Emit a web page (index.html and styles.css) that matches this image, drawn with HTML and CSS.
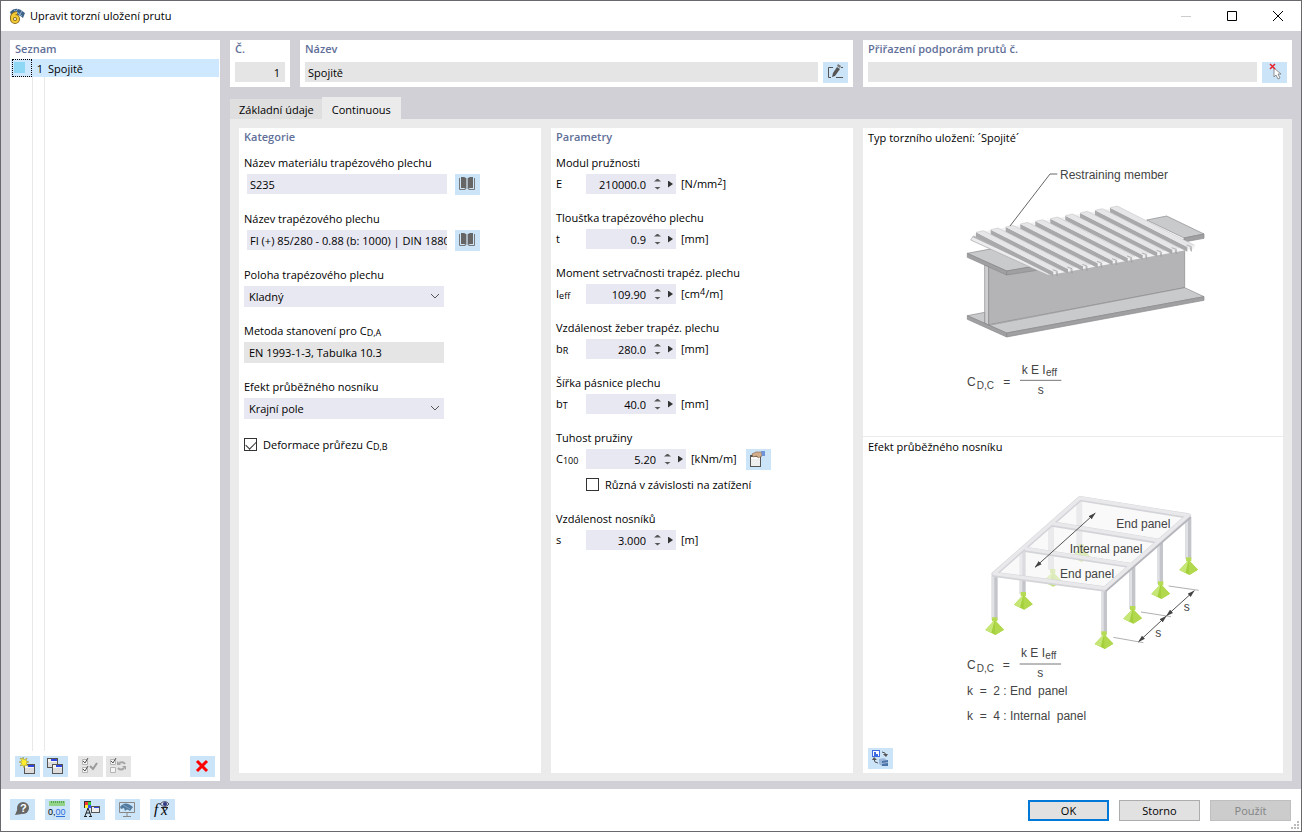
FILE: index.html
```html
<!DOCTYPE html>
<html lang="cs">
<head>
  <meta charset="utf-8">
  <title>Upravit torzní uložení prutu</title>
  <link rel="stylesheet" href="styles.css">
</head>
<body>
  <svg class="defs" aria-hidden="true">
    <defs>
      <g id="book">
        <path d="M4.500 4v11.500h6M19.500 4v11.500h-6" fill="none" stroke="#777"/>
        <path d="M6 3h3l2 1v11l-2-1H6zM18 3h-3l-2 1v11l2-1h3z" fill="#666"/>
        <path d="M11 4h2v11h-2z" fill="#aab6c0"/>
      </g>
      <g id="window">
        <path d="M0 0h11v10H0z" fill="#555"/>
        <path d="M1 1h9v8H1z" fill="#f2f2f2"/>
        <path d="M1 4h9v5H1z" fill="#dcdcdc"/>
        <path d="M4 1h6v2H4z" fill="#2f47e0"/>
      </g>
      <g id="tick-box">
        <path d="M.5.500h5v5h-5z" fill="#f4f4f4" stroke="#b5b5b5"/>
      </g>
      <g id="support">
        <path d="M-8-12h16v12H-8z" fill="#b6dc55"/>
        <path d="M0-4L-28 26l30 15 26-16z" fill="#a4d03c"/>
        <path d="M0-4L-28 26l18 9z" fill="#c6e676"/>
        <path d="M0-4L28 25 2 41z" fill="#b2d94e"/>
      </g>
      <g id="ridge">
        <path d="M0 0l232 118v14L0 14z" fill="#a9a9ac"/>
        <path d="M0 0l22-5 232 118-22 5z" fill="#e6e6e8"/>
        <path d="M0 0l22-5 232 118" fill="none" stroke="#a5a5a8" stroke-width="1"/>
        <path d="M230 112l14 5v14l-4-12" fill="#e0e0e2" stroke="#98989b" stroke-width="2"/>
      </g>
      <marker id="arrow" viewBox="0 0 20 12" refX="19" refY="6" markerWidth="22" markerHeight="16" markerUnits="userSpaceOnUse" orient="auto-start-reverse">
        <path d="M0 0l20 6-20 6z" fill="#444"/>
      </marker>
    </defs>
  </svg>

  <div class="window">
    <header class="titlebar">
      <svg class="app-icon" viewBox="0 0 16 16" width="16" height="16">
        <path d="M1 4q6-7 15 1l-2 5q-5-5-12-3z" fill="#3f6287"/>
        <path d="M5 2l8 6M9 1L4 6M13 3l-3 5" stroke="#8fb0d0"/>
        <path d="M8 5Q2 6 3 11" fill="none" stroke="#8a6c1c" stroke-width="4"/>
        <circle cx="6" cy="11" r="3" fill="#fff" stroke="#8a6c1c" stroke-width="4"/>
        <path d="M8 5Q2 6 3 11" fill="none" stroke="#f4cc35" stroke-width="2"/>
        <circle cx="6" cy="11" r="3" fill="none" stroke="#f4cc35" stroke-width="2"/>
      </svg>
      <h1>Upravit torzní uložení prutu</h1>
      <button class="win-btn" aria-label="Minimalizovat" disabled><svg viewBox="0 0 12 12" width="12" height="12"><path d="M1 6.500h10" stroke="#ccc"/></svg></button>
      <button class="win-btn" aria-label="Maximalizovat"><svg viewBox="0 0 12 12" width="12" height="12"><path d="M1.500 1.500h9v9h-9z" fill="none" stroke="#000"/></svg></button>
      <button class="win-btn" aria-label="Zavřít"><svg viewBox="0 0 12 12" width="12" height="12"><path d="M1 1l10 10M11 1L1 11" stroke="#000"/></svg></button>
    </header>

    <main class="main">
      <aside class="card list">
        <h2>Seznam</h2>
        <ul class="items">
          <li class="item"><span class="swatch"></span><span class="no">1</span><span class="name">Spojitě</span></li>
        </ul>
        <div class="list-tools">
          <button class="tool" aria-label="Nový"><svg viewBox="0 0 25 21">
            <use href="#window" x="9" y="8"/>
            <path d="M8 1l1 3 3-2-1 3 3 1-3 1 2 3-3-1-1 3-1-3-3 1 2-3-3-1 3-1-2-3 3 1z" fill="#ffee2e" stroke="#8f8a2c" stroke-width=".5"/>
          </svg></button>
          <button class="tool" aria-label="Kopírovat"><svg viewBox="0 0 25 21">
            <use href="#window" x="4" y="2"/><use href="#window" x="9" y="8"/>
          </svg></button>
          <button class="tool off gap" aria-label="Vybrat vše" disabled><svg viewBox="0 0 25 21">
            <use href="#tick-box" x="4" y="3"/><use href="#tick-box" x="4" y="11"/>
            <path d="M5 5l2 2 3-5M5 13l2 2 3-5" fill="none" stroke="#555"/>
            <path d="M12 10l3 3 4-6" fill="none" stroke="#9a9a9a" stroke-width="2"/>
          </svg></button>
          <button class="tool off" aria-label="Invertovat výběr" disabled><svg viewBox="0 0 25 21">
            <use href="#tick-box" x="4" y="3"/><use href="#tick-box" x="4" y="11"/>
            <path d="M5 5l2 2 3-5" fill="none" stroke="#555"/>
            <path d="M19 8q-2-3-6-1M12 12q3 3 6 0" fill="none" stroke="#a5a5a5" stroke-width="2"/>
            <path d="M11 5v4h4zM20 14v-4h-4z" fill="#a5a5a5"/>
          </svg></button>
          <button class="tool last" aria-label="Smazat"><svg viewBox="0 0 25 21">
            <path d="M7 5l10 10M17 5L7 15" stroke="#f00" stroke-width="3"/>
          </svg></button>
        </div>
      </aside>

      <section class="content">
        <div class="head">
          <div class="card">
            <h2><label for="no">Č.</label></h2>
            <div class="row"><input class="field grey right" id="no" value="1" readonly></div>
          </div>
          <div class="card">
            <h2><label for="name">Název</label></h2>
            <div class="row">
              <input class="field grey" id="name" value="Spojitě" readonly>
              <button class="tool" aria-label="Upravit název"><svg viewBox="0 0 25 21">
                <path d="M10 5.500H5.500v10H8M18 5.500h2M13 15.500h7" fill="none" stroke="#555"/>
                <path d="M9 15l1-4 4-6 3 2-5 7z" fill="#555"/><path d="M14 4l1-2 3 2-1 2z" fill="#777"/>
              </svg></button>
            </div>
          </div>
          <div class="card">
            <h2><label for="assign">Přiřazení podporám prutů č.</label></h2>
            <div class="row">
              <input class="field grey" id="assign" readonly>
              <button class="tool" aria-label="Vybrat pruty"><svg viewBox="0 0 25 21">
                <path d="M12 6v9l2-2 2 4 2-1-2-4h3z" fill="#fff" stroke="#777" stroke-width=".8"/>
                <path d="M8 2l5 5M13 2L8 7" stroke="#e8202a" stroke-width="1.500"/>
              </svg></button>
            </div>
          </div>
        </div>

        <div class="tabs" role="tablist">
          <button class="tab" role="tab">Základní údaje</button>
          <button class="tab active" role="tab" aria-selected="true">Continuous</button>
        </div>

        <div class="pane">
          <div class="card">
            <h2>Kategorie</h2>
            <div class="group">
              <label for="material">Název materiálu trapézového plechu</label>
              <div class="row library">
                <input class="field" id="material" value="S235">
                <button class="tool" aria-label="Knihovna materiálů"><svg viewBox="0 0 25 21"><use href="#book"/></svg></button>
              </div>
            </div>
            <div class="group">
              <label for="sheet">Název trapézového plechu</label>
              <div class="row library">
                <input class="field" id="sheet" value="FI (+) 85/280 - 0.88 (b: 1000) | DIN 18807">
                <button class="tool" aria-label="Knihovna plechů"><svg viewBox="0 0 25 21"><use href="#book"/></svg></button>
              </div>
            </div>
            <div class="group">
              <label for="position">Poloha trapézového plechu</label>
              <div class="select">
                <select id="position"><option>Kladný</option><option>Záporný</option></select>
                <svg viewBox="0 0 10 6" width="10" height="6"><path d="M1 1l4 4 4-4" fill="none" stroke="#555"/></svg>
              </div>
            </div>
            <div class="group">
              <label for="method">Metoda stanovení pro C<sub>D,A</sub></label>
              <input class="field grey method" id="method" value="EN 1993-1-3, Tabulka 10.3" readonly>
            </div>
            <div class="group">
              <label for="effect">Efekt průběžného nosníku</label>
              <div class="select">
                <select id="effect"><option>Krajní pole</option><option>Vnitřní pole</option></select>
                <svg viewBox="0 0 10 6" width="10" height="6"><path d="M1 1l4 4 4-4" fill="none" stroke="#555"/></svg>
              </div>
            </div>
            <label class="check"><input type="checkbox" checked><span>Deformace průřezu C<sub>D,B</sub></span></label>
          </div>

          <div class="card">
            <h2>Parametry</h2>
            <div class="group">
              <label for="e">Modul pružnosti</label>
              <div class="param">
                <span class="symbol">E</span>
                <div class="spin"><input id="e" value="210000.0"><span class="steps"><button aria-label="Zvýšit"></button><button aria-label="Snížit"></button></span><button class="more" aria-label="Další"></button></div>
                <span class="unit">[N/mm<sup>2</sup>]</span>
              </div>
            </div>
            <div class="group">
              <label for="t">Tloušťka trapézového plechu</label>
              <div class="param">
                <span class="symbol">t</span>
                <div class="spin"><input id="t" value="0.9"><span class="steps"><button aria-label="Zvýšit"></button><button aria-label="Snížit"></button></span><button class="more" aria-label="Další"></button></div>
                <span class="unit">[mm]</span>
              </div>
            </div>
            <div class="group">
              <label for="ieff">Moment setrvačnosti trapéz. plechu</label>
              <div class="param">
                <span class="symbol">I<sub>eff</sub></span>
                <div class="spin"><input id="ieff" value="109.90"><span class="steps"><button aria-label="Zvýšit"></button><button aria-label="Snížit"></button></span><button class="more" aria-label="Další"></button></div>
                <span class="unit">[cm<sup>4</sup>/m]</span>
              </div>
            </div>
            <div class="group">
              <label for="br">Vzdálenost žeber trapéz. plechu</label>
              <div class="param">
                <span class="symbol">b<sub>R</sub></span>
                <div class="spin"><input id="br" value="280.0"><span class="steps"><button aria-label="Zvýšit"></button><button aria-label="Snížit"></button></span><button class="more" aria-label="Další"></button></div>
                <span class="unit">[mm]</span>
              </div>
            </div>
            <div class="group">
              <label for="bt">Šířka pásnice plechu</label>
              <div class="param">
                <span class="symbol">b<sub>T</sub></span>
                <div class="spin"><input id="bt" value="40.0"><span class="steps"><button aria-label="Zvýšit"></button><button aria-label="Snížit"></button></span><button class="more" aria-label="Další"></button></div>
                <span class="unit">[mm]</span>
              </div>
            </div>
            <div class="group">
              <label for="c100">Tuhost pružiny</label>
              <div class="param">
                <span class="symbol">C<sub>100</sub></span>
                <div class="spin wide"><input id="c100" value="5.20"><span class="steps"><button aria-label="Zvýšit"></button><button aria-label="Snížit"></button></span><button class="more" aria-label="Další"></button></div>
                <span class="unit">[kNm/m]</span>
                <button class="tool" aria-label="Převzít hodnotu"><svg viewBox="0 0 25 21">
                  <path d="M4 6h11v12H4z" fill="#555"/><path d="M5 8h9v9H5z" fill="#eee"/><path d="M5 8h9v2H5z" fill="#fff"/>
                  <path d="M6 5l4-2h6v4l-4 2-1-2-4 1z" fill="#d3ad8c" stroke="#80654e" stroke-width=".6"/>
                  <path d="M15 2h4v5h-3z" fill="#6f93d8"/>
                </svg></button>
              </div>
              <label class="check indent"><input type="checkbox"><span>Různá v závislosti na zatížení</span></label>
            </div>
            <div class="group">
              <label for="s">Vzdálenost nosníků</label>
              <div class="param">
                <span class="symbol">s</span>
                <div class="spin"><input id="s" value="3.000"><span class="steps"><button aria-label="Zvýšit"></button><button aria-label="Snížit"></button></span><button class="more" aria-label="Další"></button></div>
                <span class="unit">[m]</span>
              </div>
            </div>
          </div>

          <div class="card pictures">
            <div class="picture">
              <h3>Typ torzního uložení: ´Spojité´</h3>
              <svg class="drawing" viewBox="-51 0 840 780" width="280" height="260">
                <g stroke="#88888b" stroke-width="2" stroke-linejoin="round">
                  <path d="M590 210l60-12 112 54-60 12z" fill="#c9cacc"/>
                  <path d="M762 252v13l-60 11v-12z" fill="#a0a0a3"/>
                  <path d="M104 345l12 4v177l-12-6z" fill="#cfcfd1"/>
                  <path d="M116 349l588-80v144L116 524z" fill="#b4b4b7"/>
                  <path d="M52 497l52-10v33l12 6 588-113 58 27-592 109z" fill="#c9cacc"/>
                  <path d="M52 497l118 52v12L52 508z" fill="#a0a0a3"/>
                  <path d="M170 549l592-109v11L170 561z" fill="#a0a0a3"/>
                  <path d="M52 310l80-15 150 50-112 18z" fill="#c9cacc"/>
                  <path d="M52 310l118 53v12L52 322z" fill="#a0a0a3"/>
                  <path d="M170 363l90-16v14l-90 14z" fill="#a0a0a3"/>
                </g>
                <path d="M62 270l16-22 424-76 232 116-2 8-436 80z" fill="#f2f2f3"/>
                <path d="M62 270l235 107v-12L70 258z" fill="#ececee" stroke="#a5a5a8" stroke-width="2"/>
                <path d="M70 260l229 107" stroke="#b0b0b3" stroke-width="4"/>
                <use href="#ridge" x="480" y="173"/>
                <use href="#ridge" x="435" y="181"/>
                <use href="#ridge" x="390" y="189"/>
                <use href="#ridge" x="346" y="197"/>
                <use href="#ridge" x="301" y="206"/>
                <use href="#ridge" x="256" y="214"/>
                <use href="#ridge" x="211" y="222"/>
                <use href="#ridge" x="167" y="231"/>
                <use href="#ridge" x="122" y="239"/>
                <use href="#ridge" x="78" y="247"/>
                <path d="M322 72h-22L180 228" fill="none" stroke="#666" stroke-width="3"/>
                <g class="caption">
                  <text x="330" y="87">Restraining member</text>
                  <text x="51" y="708">C</text><text class="small" x="80" y="716">D,C</text>
                  <text x="160" y="708">=</text>
                  <text x="215" y="672">k E I</text><text class="small" x="288" y="677">eff</text>
                  <text x="263" y="731">s</text>
                </g>
                <path d="M210 691h124" stroke="#777" stroke-width="3"/>
              </svg>
            </div>
            <div class="picture">
              <h3>Efekt průběžného nosníku</h3>
              <svg class="drawing frame" viewBox="-81 0 840 750" width="280" height="250">
                <g opacity=".7">
                  <path d="M358 60v140M273 135v134" stroke="#d3d4d8" stroke-width="18"/>
                  <use href="#support" x="363" y="205"/><use href="#support" x="278" y="279"/>
                </g>
                <g fill="none" stroke="#c4c5ca" stroke-width="18">
                  <path d="M104 288v132M188 212v130M432 330v132M517 258v128M600 182v130M685 110v126"/>
                </g>
                <g fill="none" stroke="#e0e1e5" stroke-width="8">
                  <path d="M99 288v132M183 212v130M427 330v132M512 258v128M595 182v130M680 110v126"/>
                </g>
                <path d="M100 283L360 55l325 52-250 222z" fill="#f4f4f5" fill-opacity=".5"/>
                <g fill="none" stroke="#d3d4d8" stroke-width="16" stroke-linejoin="round">
                  <path d="M102 283L360 56l325 52-250 219zM195 208l320 49M277 132l320 52"/>
                </g>
                <g fill="none" stroke="#e9e9ec" stroke-width="10" stroke-linejoin="round">
                  <path d="M102 281L360 54l325 52-250 219zM195 206l320 49M277 130l320 52"/>
                </g>
                <path d="M437 334L692 112" stroke="#b4b5bb" stroke-width="5"/>
                <use href="#support" x="104" y="424"/><use href="#support" x="190" y="348"/>
                <use href="#support" x="432" y="466"/><use href="#support" x="518" y="390"/>
                <use href="#support" x="602" y="316"/><use href="#support" x="686" y="244"/>
                <g class="dims">
                  <line x1="225" y1="262" x2="406" y2="99"/>
                  <line x1="535" y1="486" x2="619" y2="408"/>
                  <line x1="619" y1="408" x2="703" y2="332"/>
                </g>
                <path d="M460 472l90 16M543 396l90 14M626 318l90 13" stroke="#888" stroke-width="2"/>
                <g class="caption">
                  <text x="469" y="143">End panel</text>
                  <text x="329" y="218">Internal panel</text>
                  <text x="300" y="294">End panel</text>
                  <text x="671" y="394">s</text><text x="586" y="472">s</text>
                  <text x="21" y="567">C</text><text class="small" x="50" y="575">D,C</text>
                  <text x="128" y="567">=</text>
                  <text x="183" y="531">k E I</text><text class="small" x="256" y="537">eff</text>
                  <text x="232" y="590">s</text>
                  <text x="21" y="645">k&nbsp; =&nbsp; 2 : End&nbsp; panel</text>
                  <text x="21" y="721">k&nbsp; =&nbsp; 4 : Internal&nbsp; panel</text>
                </g>
                <path d="M179 552h124" stroke="#777" stroke-width="3"/>
              </svg>
              <button class="tool swap" aria-label="Přepnout obrázek"><svg viewBox="0 0 25 21">
                <path d="M4 2h8v7H4z" fill="#3d6be0"/><path d="M5 3h6v5H5z" fill="#fff"/><path d="M6 4h2v2h2v2H6z" fill="#3d6be0"/>
                <path d="M14 4q4 0 4 4M10 15q-4 0-4-4" fill="none" stroke="#555"/>
                <path d="M15 6h5l-2 3zM4 12h5l-3-3z" fill="#555"/>
                <path d="M11 11l5-1 4 3v5h-6l-3-2z" fill="#9db8da"/><path d="M14 13l6-1v2l-6 1zM14 16l6-1v3h-6z" fill="#4d74a8"/>
              </svg></button>
            </div>
          </div>
        </div>
      </section>
    </main>

    <footer class="footer">
      <button class="tool" aria-label="Nápověda"><svg viewBox="0 0 25 21">
        <circle cx="13" cy="9" r="6" fill="#666"/><path d="M8 9l-3 7 7-1z" fill="#666"/>
        <text x="10" y="13" class="glyph help">?</text>
      </svg></button>
      <button class="tool" aria-label="Jednotky"><svg viewBox="0 0 25 21">
        <path d="M4 2h16v5H4z" fill="#92d488"/><path d="M6.500 2v2M8.500 2v2M10.500 2v2M12.500 2v2M14.500 2v2M16.500 2v2M18.500 2v2" stroke="#5aa455"/>
        <text x="3" y="16" class="glyph">0,<tspan fill="#2f6fdc">00</tspan></text><path d="M11 17.500h9" stroke="#2f6fdc"/>
      </svg></button>
      <button class="tool" aria-label="Zobrazení"><svg viewBox="0 0 25 21">
        <path d="M4 2h7v7H4z" fill="#333"/><path d="M5 3h3v3H5z" fill="#f33"/><path d="M8 3h3v3H8z" fill="#3c3"/><path d="M5 6h3v3H5z" fill="#fe3"/><path d="M8 6h3v3H8z" fill="#35f"/>
        <path d="M8 9l-3 8M8 9l3 8M6 14h4M4 17.500h3M9 17.500h3" stroke="#222" fill="none"/>
        <path d="M11 7h9v7h-9z" fill="#555"/><path d="M12 8h7v5h-7z" fill="#eee"/><path d="M14 8h5v1h-5z" fill="#2f47e0"/>
      </svg></button>
      <button class="tool" aria-label="Zobrazit model"><svg viewBox="0 0 25 21">
        <path d="M4.500 3.500h15v10h-15z" fill="#cce4f7" stroke="#888"/>
        <path d="M5 8q5-7 13 0l-3 4q-3-3-5 0l-1-3-3 1z" fill="#537ba0"/><path d="M8 6l7 4" stroke="#7fa1c2"/><path d="M12 14v3M8 17.500h8" stroke="#888"/>
      </svg></button>
      <button class="tool" aria-label="Vzorec"><svg viewBox="0 0 25 21">
        <text x="4" y="15" class="glyph formula">f</text><text x="11" y="16" class="glyph formula">x</text>
        <path d="M11 8.500h7" stroke="#222"/>
        <path d="M10 5q5-5 9 0-4 5-9 0z" fill="#cfd8ee" stroke="#334" stroke-width=".8"/><circle cx="15" cy="5" r="2" fill="#303a80"/>
      </svg></button>
      <div class="actions">
        <button class="btn primary">OK</button>
        <button class="btn">Storno</button>
        <button class="btn" disabled>Použít</button>
      </div>
      <svg class="grip" viewBox="0 0 8 8" width="8" height="8"><path d="M6 0h2v2H6zM3 3h2v2H3zM6 3h2v2H6zM0 6h2v2H0zM3 6h2v2H3zM6 6h2v2H6z" fill="#bbb"/></svg>
    </footer>
  </div>
</body>
</html>
```

FILE: styles.css
```css
* {
  box-sizing: border-box;
}

body {
  margin: 0;
  font-family: "Open Sans", "Noto Sans", sans-serif;
  font-size: 11px;
  line-height: 16px;
  color: #000;
}

h1, h2, h3, ul {
  margin: 0;
  padding: 0;
  font-size: 11px;
  font-weight: normal;
}

button, input, select {
  margin: 0;
  padding: 0;
  border: none;
  border-radius: 0;
  background: none;
  font: inherit;
  color: inherit;
}

.defs {
  position: absolute;
  width: 0;
  height: 0;
}

.window {
  display: flex;
  flex-direction: column;
  min-height: 100vh;
  border: 1px solid #69686d;
  background: #fff;
}

/* title bar */
.titlebar {
  display: flex;
  align-items: center;
  height: 30px;
  padding-left: 8px;
}

.titlebar h1 {
  flex: 1;
  margin-left: 5px;
}

.win-btn {
  display: flex;
  align-items: center;
  justify-content: center;
  width: 46px;
  height: 30px;
}

/* main area */
.main {
  display: flex;
  flex: 1;
  gap: 10px;
  padding: 9px 9px 8px;
  background: #d1d0d6;
}

.card {
  padding: 1px 5px 4px;
  background: #fff;
}

h2 {
  font-weight: 600;
  color: #5f6f98;
}

.list {
  display: flex;
  flex-direction: column;
  flex: none;
  width: 210px;
}

.items {
  flex: 1;
  margin: 2px -4px 5px;
  list-style: none;
  background: linear-gradient(#e8e8e8, #e8e8e8) 21px 0 / 1px 100% no-repeat, linear-gradient(#e8e8e8, #e8e8e8) 33px 0 / 1px 100% no-repeat;
}

.item {
  display: flex;
  height: 18px;
  line-height: 20px;
  background: #cde8ff;
}

.swatch {
  width: 20px;
  height: 18px;
  margin-left: 1px;
  border: 1px dotted #000;
  background: linear-gradient(#8fd8f5, #8fd8f5) 1px 2px / 11px 11px no-repeat;
}

.no {
  width: 11px;
  text-align: right;
}

.name {
  margin-left: 5px;
}

.list-tools {
  display: flex;
  gap: 3px;
}

.tool {
  flex: none;
  width: 25px;
  height: 21px;
  background: #cce4f7;
}

.tool svg {
  display: block;
  width: 25px;
  height: 21px;
}

.tool.off {
  background: #e5e5e5;
}

.tool.gap {
  margin-left: 7px;
}

.tool.last {
  margin-left: auto;
}

.content {
  display: flex;
  flex-direction: column;
  flex: 1;
  min-width: 0;
}

.head {
  display: grid;
  grid-template-columns: 60px 553fr 429fr;
  gap: 10px;
}

.row {
  display: flex;
  gap: 5px;
}

.head .row {
  margin-top: 5px;
}

.field {
  flex: 1;
  min-width: 0;
  height: 20px;
  padding: 0 0 0 3px;
  background: #e8e8f2;
}

.field.grey {
  background: #e5e5e5;
}

.field.right {
  padding-right: 5px;
  text-align: right;
}

/* tabs */
.tabs {
  display: flex;
  align-items: flex-end;
  height: 22px;
  margin-top: 10px;
}

.tab {
  height: 20px;
  padding: 2px 8px 0 9px;
  background: #dfdfdf;
}

.tab.active {
  height: 22px;
  padding: 4px 10px 0;
  background: #ebebeb;
}

.pane {
  display: grid;
  grid-template-columns: 302fr 302fr 420fr;
  flex: 1;
  gap: 10px;
  padding: 9px 9px 8px;
  background: #ebebeb;
}

.pane h2 {
  margin-bottom: 10px;
}

.group {
  margin-bottom: 16px;
}

.group > label {
  display: block;
  height: 16px;
  margin-bottom: 3px;
}

sub, sup {
  font-size: 9px;
  line-height: 0;
}

sub {
  vertical-align: -1px;
}

sup {
  vertical-align: 3px;
}

.library {
  gap: 8px;
  margin-left: 3px;
}

.library .field {
  flex: 0 1 200px;
}

.field.method {
  display: block;
  width: 200px;
  height: 21px;
  padding: 0 5px;
}

.select {
  position: relative;
  width: 200px;
}

.select select {
  display: block;
  width: 100%;
  height: 21px;
  padding: 0 5px;
  appearance: none;
  background: #e8e8f2;
}

.select svg {
  position: absolute;
  top: 7px;
  right: 4px;
  pointer-events: none;
}

.check {
  display: flex;
  align-items: center;
  height: 19px;
}

.check input {
  display: flex;
  align-items: center;
  justify-content: center;
  width: 13px;
  height: 13px;
  margin-right: 6px;
  appearance: none;
  border: 1px solid #333;
  background: #fff;
}

.check input:checked::before {
  content: "";
  width: 9px;
  height: 5px;
  border: solid #333;
  border-width: 0 0 1px 1px;
  transform: translateY(-1px) rotate(-45deg);
}

.group > .check.indent {
  display: flex;
  height: 17px;
  margin: 7px 0 18px 30px;
}

.param {
  display: flex;
  height: 20px;
}

.symbol {
  width: 30px;
  line-height: 20px;
}

.spin {
  display: flex;
  align-items: center;
  width: 90px;
  background: #e8e8f2;
}

.spin.wide {
  width: 100px;
}

.spin input {
  flex: 1;
  min-width: 0;
  height: 20px;
  text-align: right;
}

.steps {
  display: flex;
  flex-direction: column;
  gap: 5px;
  width: 7px;
  margin-left: 8px;
}

.steps button {
  height: 3px;
  background: #555;
  clip-path: polygon(50% 0, 100% 100%, 0 100%);
}

.steps button + button {
  clip-path: polygon(0 0, 100% 0, 50% 100%);
}

.more {
  width: 5px;
  height: 7px;
  margin: 0 3px 0 7px;
  background: #333;
  clip-path: polygon(0 0, 100% 50%, 0 100%);
}

.unit {
  padding-left: 5px;
  line-height: 20px;
}

.param .tool {
  margin-left: 9px;
}

/* pictures */
.pictures {
  display: grid;
  grid-template-rows: 308fr 337fr;
  padding: 0;
}

.picture {
  display: flex;
  flex-direction: column;
  padding: 2px 5px 4px;
}

.picture + .picture {
  border-top: 1px solid #ebebeb;
}

.drawing {
  align-self: center;
  margin-top: 4px;
}

.drawing.frame {
  margin-top: 25px;
}

.dims line {
  stroke: #555;
  stroke-width: 3px;
  marker-start: url(#arrow);
  marker-end: url(#arrow);
}

.caption {
  font-family: "Liberation Sans", Arial, sans-serif;
  font-size: 36px;
  fill: #444;
}

.caption .small {
  font-size: 30px;
}

.swap {
  margin-top: auto;
}

/* footer */
.footer {
  position: relative;
  display: flex;
  gap: 10px;
  padding: 10px 10px 11px 9px;
}

.glyph {
  font-family: "Liberation Sans", Arial, sans-serif;
  font-size: 9px;
}

.glyph.help {
  font-size: 11px;
  font-weight: bold;
  fill: #fff;
}

.formula {
  font: italic 15px "Liberation Serif", serif;
}

.actions {
  display: flex;
  gap: 10px;
  margin: 1px 0 -1px auto;
}

.btn {
  width: 81px;
  height: 21px;
  border: 1px solid #adadad;
  background: #e1e1e1;
}

.btn.primary {
  border: 2px solid #0078d7;
}

.btn:disabled {
  border-color: #bfbfbf;
  background: #ccc;
  color: #838383;
}

.grip {
  position: absolute;
  right: 2px;
  bottom: 2px;
}
```
